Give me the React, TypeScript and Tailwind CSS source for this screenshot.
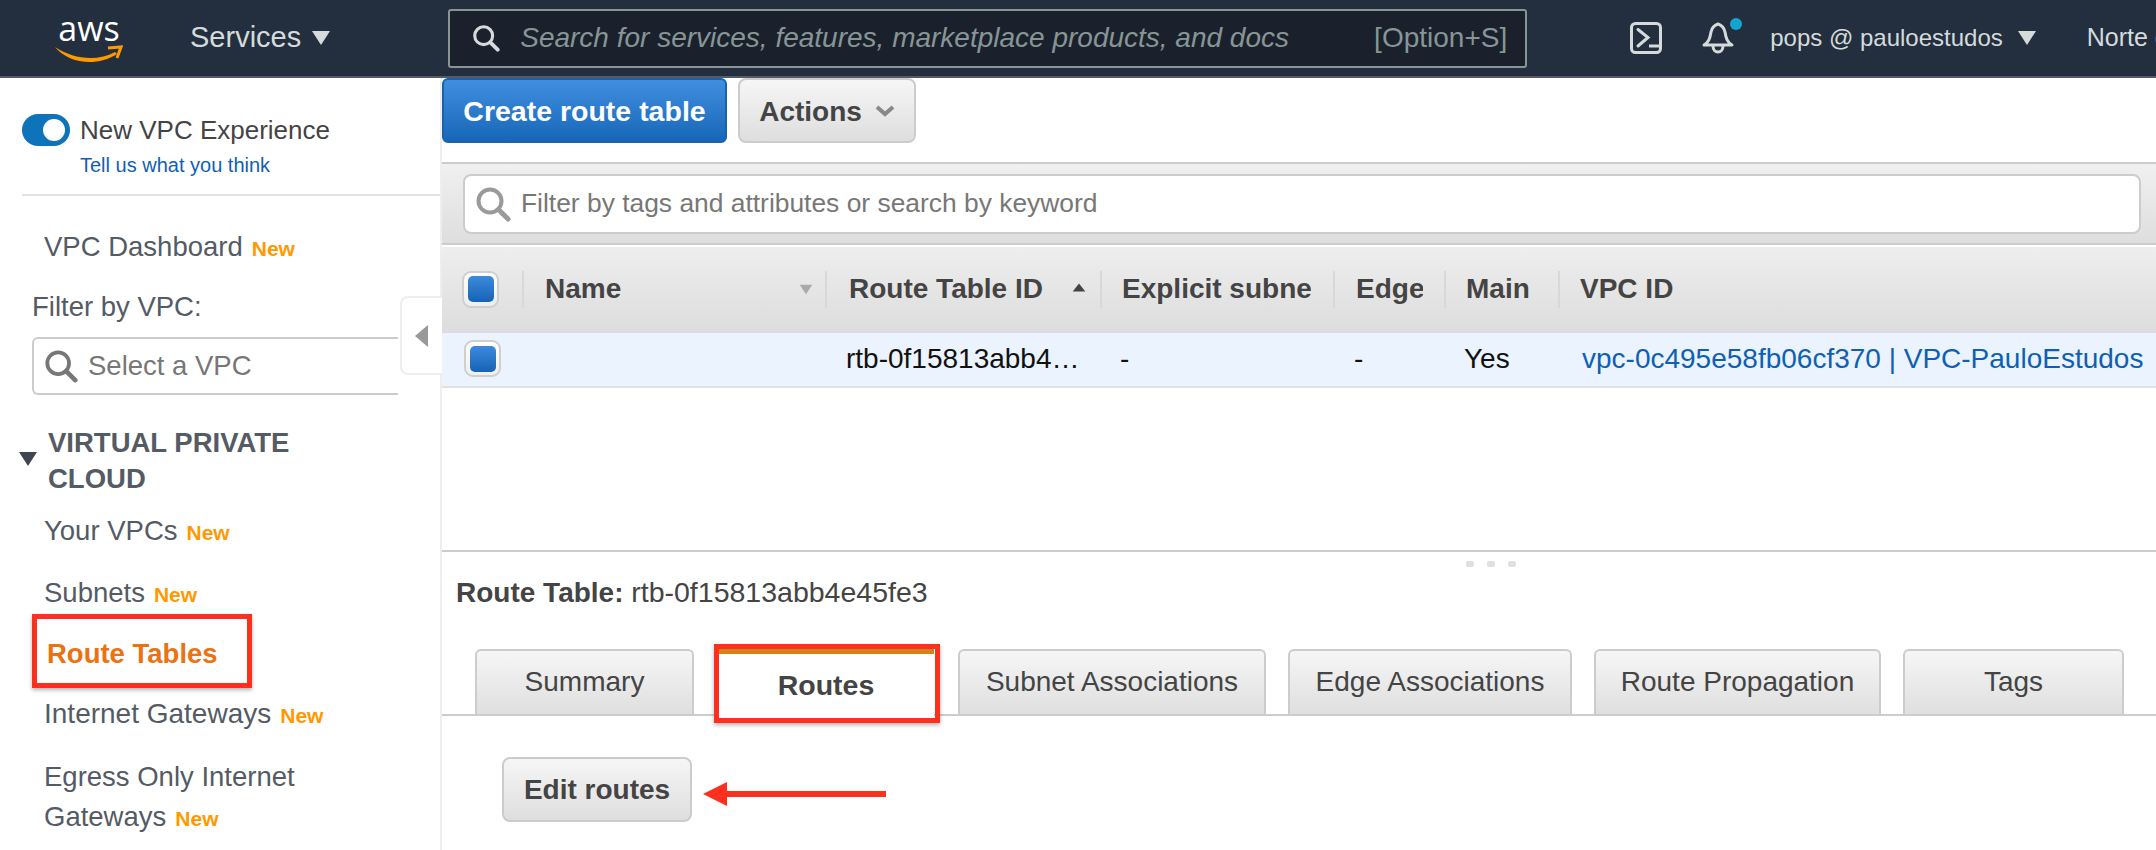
import React from "react";

const New = () => <span className="ml-[9px] text-[21px] font-bold text-[#ff9900]">New</span>;

const Tri = ({ className, color = "#d5dbdb", up = false, w = 20, h = 16 }: { className?: string; color?: string; up?: boolean; w?: number; h?: number }) => (
  <svg width={w} height={h} viewBox="0 0 20 16" className={className} preserveAspectRatio="none">
    <path d={up ? "M10 1 L19 15 L1 15 Z" : "M1 1 L19 1 L10 15 Z"} fill={color} />
  </svg>
);

const Mag = ({ color = "#9a9a9a", size = 36 }: { color?: string; size?: number }) => (
  <svg width={size} height={size} viewBox="0 0 36 36" fill="none" className="shrink-0">
    <circle cx="15" cy="15" r="11.5" stroke={color} strokeWidth="4" />
    <path d="M23.5 23.5 L33 33" stroke={color} strokeWidth="5" strokeLinecap="round" />
  </svg>
);

const Check = () => (
  <div className="flex h-[37px] w-[37px] shrink-0 items-center justify-center rounded-[9px] border-2 border-[#cfcfcf] bg-gradient-to-b from-[#ffffff] to-[#eeeeee]">
    <div className="h-[26px] w-[26px] rounded-[5px] bg-gradient-to-b from-[#3c8ade] to-[#1563b5]" />
  </div>
);

const HeadCell = ({ w, pl, children }: { w: string; pl: string; children?: React.ReactNode }) => (
  <div className={`${w} ${pl} flex h-[37px] shrink-0 items-center overflow-hidden whitespace-nowrap border-l-2 border-[#d8d8d8] text-[28px] font-bold text-[#444444]`}>{children}</div>
);

const Tab = ({ w, children }: { w: string; children: React.ReactNode }) => (
  <div className={`${w} flex h-[65px] shrink-0 items-center justify-center rounded-t-[6px] border-2 border-b-0 border-[#cccccc] bg-gradient-to-b from-[#f6f6f6] to-[#dfdfdf] pb-[2px] text-[28px] text-[#444444]`}>{children}</div>
);

const App = () => (
  <div className="flex h-[850px] w-[2156px] flex-col overflow-hidden bg-white font-['Liberation_Sans',Arial,sans-serif]">
    {/* top bar */}
    <header className="flex h-[78px] shrink-0 items-center overflow-hidden whitespace-nowrap border-b-2 border-[#545b64] bg-[#232f3e] text-[#d5dbdb]">
      <div className="relative ml-[55px] flex h-[44px] w-[68px] shrink-0 flex-col items-center">
        <span className="mt-[-7px] text-[34px] leading-[38px] text-white font-['Open_Sans',sans-serif]">aws</span>
        <svg width="68" height="18" viewBox="0 0 68 18" className="absolute bottom-[-3px] left-0">
          <path d="M0 2 C18 14 42 17 60 7 L62 9 C42 22 14 19 0 2 Z" fill="#ff9900" />
          <path d="M53 3 L66 2 L62 13" stroke="#ff9900" strokeWidth="3" fill="none" />
        </svg>
      </div>
      <span className="ml-[67px] shrink-0 text-[29px]">Services</span>
      <Tri className="ml-[10px] shrink-0" />
      <div className="ml-[117px] flex h-[59px] w-[1079px] shrink-0 items-center rounded-[3px] border-2 border-[#879596] bg-[#1a212c] pl-[22px] pr-[18px]">
        <Mag color="#d5dbdb" size={28} />
        <span className="ml-[20px] text-[28px] italic text-[#879596]">Search for services, features, marketplace products, and docs</span>
        <span className="ml-auto text-[28px] text-[#879596]">[Option+S]</span>
      </div>
      <svg width="32" height="32" viewBox="0 0 32 32" fill="none" className="ml-[103px] shrink-0">
        <rect x="1.5" y="1.5" width="29" height="29" rx="4" stroke="#d5dbdb" strokeWidth="3" />
        <path d="M8 7.500 L18 15.500 L8 24" stroke="#d5dbdb" strokeWidth="3" strokeLinecap="round" />
        <path d="M19 24 H29" stroke="#d5dbdb" strokeWidth="3" />
      </svg>
      <div className="relative ml-[40px] h-[32px] w-[33px] shrink-0">
        <svg width="33" height="32" viewBox="0 0 33 32" fill="none">
          <path d="M2 23 C7 20 8 16 9 10 C10 5 13 3 16 2 C19 3 22 5 23 10 C24 16 25 20 30 23 Z" stroke="#d5dbdb" strokeWidth="3" strokeLinejoin="round" />
          <path d="M11 24 C11 32 21 32 21 24" stroke="#d5dbdb" strokeWidth="3" />
        </svg>
        <div className="absolute left-[28px] top-[-4px] h-[12px] w-[12px] rounded-full bg-[#16a3cf]" />
      </div>
      <span className="ml-[35px] shrink-0 text-[24px]">pops @ pauloestudos</span>
      <Tri className="ml-[14px] shrink-0" />
      <span className="ml-[50px] shrink-0 text-[25px]">Norte da Virgínia</span>
    </header>

    <div className="flex min-h-0 flex-1">
      {/* sidebar */}
      <aside className="relative w-[442px] shrink-0 border-r-2 border-[#eeeeee] text-[27.500px] leading-[34px] text-[#545b64]">
        <div className="ml-[22px] mt-[36px] flex h-[32px] items-center text-[26px]">
          <div className="flex h-[32px] w-[48px] items-center justify-end rounded-full bg-[#0f73ba] pr-[5px]">
            <div className="h-[22px] w-[22px] rounded-full bg-white" />
          </div>
          <span className="ml-[10px] text-[#444444]">New VPC Experience</span>
        </div>
        <div className="ml-[80px] mt-[7px] text-[20px] leading-[24px] text-[#0f5fb5]">Tell us what you think</div>
        <div className="ml-[22px] mt-[17px] h-[2px] bg-[#e2e2e2]" />
        <div className="ml-[44px] mt-[34px]">VPC Dashboard<New /></div>
        <div className="ml-[32px] mt-[24px]">Filter by VPC:</div>
        <div className="ml-[32px] mt-[13px] flex h-[58px] w-[366px] items-center rounded-l-[6px] border-y-2 border-l-2 border-[#cccccc] pl-[10px] text-[#777777]">
          <Mag color="#777777" size={34} />
          <span className="ml-[10px]">Select a VPC</span>
        </div>
        <div className="mt-[30px] flex">
          <Tri className="ml-[18px] mt-[26px] shrink-0" color="#3f4650" />
          <div className="ml-[10px] w-[320px] font-bold leading-[36px]">VIRTUAL PRIVATE CLOUD</div>
        </div>
        <div className="ml-[44px] mt-[17px]">Your VPCs<New /></div>
        <div className="ml-[44px] mt-[26px]">Subnets<New /></div>
        <div className="relative ml-[47px] mt-[25px] font-bold text-[#ec7211]">
          Route Tables
          <div className="pointer-events-none absolute left-[-15px] top-[-23px] h-[74px] w-[220px] border-[5px] border-[#fd2f1f] shadow-[0_2px_4px_rgba(0,0,0,0.3)]" />
        </div>
        <div className="ml-[44px] mt-[26px] text-[28px]">Internet Gateways<New /></div>
        <div className="ml-[44px] mt-[24px] w-[340px] leading-[40px]">Egress Only Internet Gateways<New /></div>
        {/* collapse handle */}
        <div className="absolute left-[400px] top-[218px] flex h-[79px] w-[42px] items-center justify-center rounded-l-[8px] border-y-2 border-l-2 border-[#eeeeee] bg-white">
          <svg width="14" height="22" viewBox="0 0 14 22"><path d="M13 0 V22 L0 11 Z" fill="#999999" /></svg>
        </div>
      </aside>

      {/* main */}
      <main className="flex min-w-0 flex-1 flex-col">
        <div className="flex h-[65px] shrink-0 gap-[11px]">
          <div className="flex h-[65px] w-[285px] items-center justify-center rounded-[6px] border-2 border-[#1a62ad] bg-gradient-to-b from-[#3f8fe0] to-[#1766b8] pt-[2px] text-[28.500px] font-bold text-white">Create route table</div>
          <div className="flex h-[65px] w-[178px] items-center justify-center gap-[13px] rounded-[8px] border-2 border-[#cccccc] bg-gradient-to-b from-[#f6f6f6] to-[#dedede] pt-[2px] text-[28px] font-bold text-[#444444]">
            Actions
            <svg width="20" height="13" viewBox="0 0 20 13" fill="none"><path d="M2 2 L10 9 L18 2" stroke="#888888" strokeWidth="4" /></svg>
          </div>
        </div>
        <div className="mt-[19px] flex h-[83px] shrink-0 items-center border-y-2 border-[#cccccc] bg-gradient-to-b from-[#f0f0f0] to-[#dedede] pl-[21px] pr-[15px]">
          <div className="flex h-[60px] flex-1 items-center rounded-[8px] border-2 border-[#cccccc] bg-white pl-[10px] text-[26.400px] text-[#777777]">
            <Mag size={36} />
            <span className="ml-[10px]">Filter by tags and attributes or search by keyword</span>
          </div>
        </div>
        {/* table head */}
        <div className="mt-[2px] flex h-[84px] shrink-0 items-center bg-gradient-to-b from-[#eeeeee] to-[#dddddd]">
          <div className="flex w-[80px] shrink-0 pl-[20px]"><Check /></div>
          <HeadCell w="w-[303px]" pl="pl-[21px]">
            <span>Name</span>
            <Tri className="ml-[178px] shrink-0" color="#aaaaaa" w={14} h={11} />
          </HeadCell>
          <HeadCell w="w-[275px]" pl="pl-[22px]">
            <span>Route Table ID</span>
            <Tri className="mb-[4px] ml-[29px] shrink-0" color="#444444" up w={14} h={9} />
          </HeadCell>
          <HeadCell w="w-[233px]" pl="pl-[20px]"><span className="w-[189px] overflow-hidden">Explicit subnet</span></HeadCell>
          <HeadCell w="w-[111px]" pl="pl-[21px]"><span className="w-[67px] overflow-hidden">Edge</span></HeadCell>
          <HeadCell w="w-[114px]" pl="pl-[20px]">Main</HeadCell>
          <HeadCell w="flex-1" pl="pl-[20px]">VPC ID</HeadCell>
        </div>
        {/* table row */}
        <div className="flex h-[57px] shrink-0 items-center whitespace-nowrap border-b-2 border-t-2 border-b-[#e2e2e2] border-t-[#dddddd] bg-[#eaf3fe] pb-[2px] text-[28px] text-[#111111]">
          <div className="flex w-[80px] shrink-0 pl-[22px]"><Check /></div>
          <div className="w-[303px] shrink-0" />
          <div className="w-[275px] shrink-0 pl-[21px]">rtb-0f15813abb4…</div>
          <div className="w-[233px] shrink-0 pl-[20px]">-</div>
          <div className="w-[111px] shrink-0 pl-[21px]">-</div>
          <div className="w-[114px] shrink-0 pl-[20px]">Yes</div>
          <div className="pl-[24px] text-[#0f5fb5]">vpc-0c495e58fb06cf370 | VPC-PauloEstudos</div>
        </div>
        {/* details pane */}
        <div className="mt-[162px] flex flex-1 flex-col border-t-2 border-[#cccccc]">
          <div className="ml-[1024px] mt-[9px] flex h-[6px] gap-[13px]">
            <div className="h-[6px] w-[8px] rounded-[2px] bg-[#e0e0e0]" />
            <div className="h-[6px] w-[8px] rounded-[2px] bg-[#e0e0e0]" />
            <div className="h-[6px] w-[8px] rounded-[2px] bg-[#e0e0e0]" />
          </div>
          <div className="ml-[14px] mt-[10px] whitespace-nowrap text-[28px] leading-[30px] text-[#444444]">
            <span className="font-bold">Route Table:</span> <span className="text-[28.500px]">rtb-0f15813abb4e45fe3</span>
          </div>
          <div className="mt-[42px] flex h-[66px] shrink-0 items-end gap-[22px] border-b-2 border-[#cccccc] pl-[33px]">
            <Tab w="w-[219px]">Summary</Tab>
            <div className="relative mx-[2px] mb-[-2px] flex h-[67px] w-[216px] shrink-0 items-center justify-center border-t-[5px] border-[#d6801f] bg-white text-[28.500px] font-bold text-[#444444]">
              Routes
              <div className="absolute left-[-4px] top-[-10px] h-[79px] w-[226px] border-[5px] border-[#fd2f1f] shadow-[0_2px_4px_rgba(0,0,0,0.3)]" />
            </div>
            <Tab w="w-[308px]">Subnet Associations</Tab>
            <Tab w="w-[284px]">Edge Associations</Tab>
            <Tab w="w-[287px]">Route Propagation</Tab>
            <Tab w="w-[221px]">Tags</Tab>
          </div>
          <div className="ml-[60px] mt-[41px] flex items-center">
            <div className="flex h-[65px] w-[190px] items-center justify-center rounded-[8px] border-2 border-[#cccccc] bg-gradient-to-b from-[#f6f6f6] to-[#dedede] text-[28px] font-bold text-[#444444]">Edit routes</div>
            <svg width="183" height="24" viewBox="0 0 183 24" className="ml-[11px] mt-[8px]">
              <path d="M0 12 L24 0 V9 H183 V15 H24 V24 Z" fill="#fd2f1f" />
            </svg>
          </div>
        </div>
      </main>
    </div>
  </div>
);

export default App;
